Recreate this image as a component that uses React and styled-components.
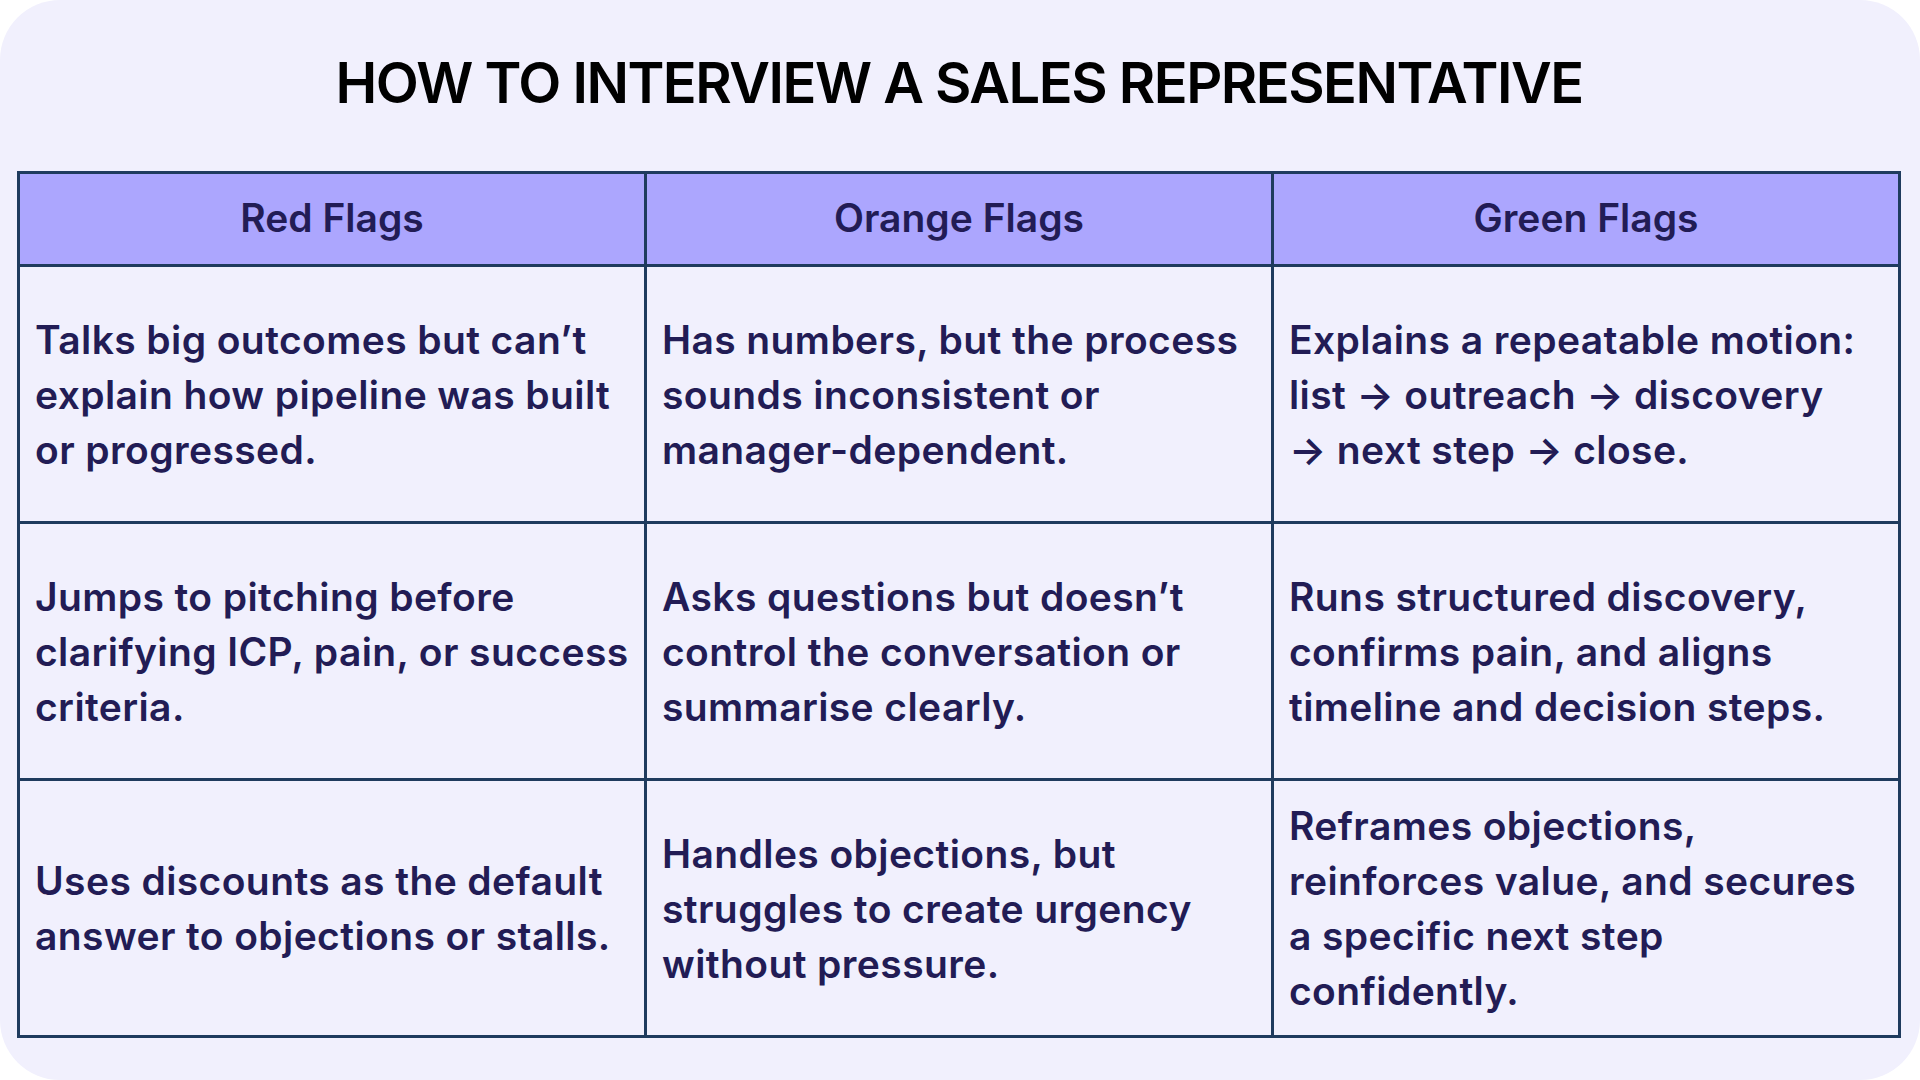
import React from "react";
import styled, { createGlobalStyle } from "styled-components";

const GlobalStyle = createGlobalStyle`
  html, body {
    margin: 0;
    padding: 0;
    background: #ffffff;
  }
  body {
    font-family: "Inter", "Noto Sans", sans-serif;
  }
`;

const columns = ["Red Flags", "Orange Flags", "Green Flags"];

const rows = [
  [
    ["Talks big outcomes but can\u2019t", "explain how pipeline was built", "or progressed."],
    ["Has numbers, but the process", "sounds inconsistent or", "manager-dependent."],
    ["Explains a repeatable motion:", "list \u2192 outreach \u2192 discovery", "\u2192 next step \u2192 close."],
  ],
  [
    ["Jumps to pitching before", "clarifying ICP, pain, or success", "criteria."],
    ["Asks questions but doesn\u2019t", "control the conversation or", "summarise clearly."],
    ["Runs structured discovery,", "confirms pain, and aligns", "timeline and decision steps."],
  ],
  [
    ["Uses discounts as the default", "answer to objections or stalls."],
    ["Handles objections, but", "struggles to create urgency", "without pressure."],
    ["Reframes objections,", "reinforces value, and secures", "a specific next step", "confidently."],
  ],
];

function App() {
  return (
    <>
      <GlobalStyle />
      <Card>
        <Title>How to interview a sales representative</Title>
        <Table>
          {columns.map((c) => (
            <HeadCell key={c}>{c}</HeadCell>
          ))}
          {rows.map((row, i) =>
            row.map((lines, j) => (
              <Cell key={`${i}-${j}`}>
                <CellText>
                  {lines.map((l, k) => (
                    <Line key={k}>{l}</Line>
                  ))}
                </CellText>
              </Cell>
            ))
          )}
        </Table>
      </Card>
    </>
  );
}

export default App;

const Card = styled.div`
  box-sizing: border-box;
  width: 1920px;
  height: 1080px;
  background: #f1f0fd;
  border-radius: 60px;
  padding: 48px 19px 0 17px;
  display: flex;
  flex-direction: column;
  align-items: stretch;
`;

const Title = styled.h1`
  margin: 0;
  height: 70px;
  line-height: 70px;
  text-align: center;
  text-transform: uppercase;
  font-family: "Inter", sans-serif;
  font-weight: 600;
  font-size: 56px;
  letter-spacing: -1.5px;
  color: #000000;
`;

const Table = styled.div`
  margin-top: 53px;
  display: grid;
  grid-template-columns: repeat(3, minmax(0, 1fr));
  grid-template-rows: 90px repeat(3, 254px);
  gap: 3px;
  padding: 3px;
  background: #1f3b5e;
`;

const HeadCell = styled.div`
  background: #aca6fe;
  display: flex;
  align-items: center;
  justify-content: center;
  padding-bottom: 4px;
  font-family: "Inter", sans-serif;
  font-weight: 600;
  font-size: 39px;
  color: #221c55;
`;

const Cell = styled.div`
  background: #f1f0fd;
  display: flex;
  align-items: center;
  padding: 0 15px;
`;

const CellText = styled.div`
  font-family: "Inter", sans-serif;
  font-weight: 600;
  font-size: 39px;
  line-height: 55px;
  letter-spacing: 0.4px;
  color: #221c55;
`;

const Line = styled.div`
  white-space: nowrap;
`;
